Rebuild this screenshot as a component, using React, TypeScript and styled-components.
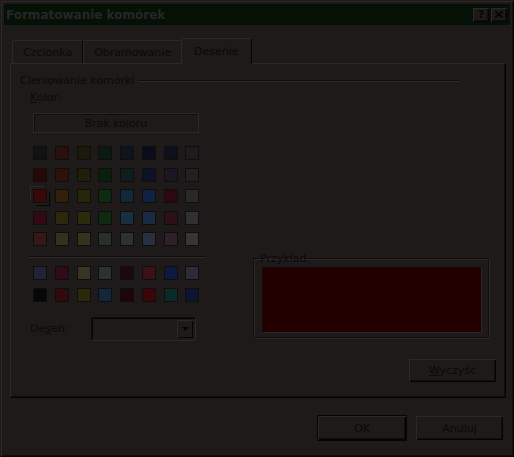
import React from "react";
import styled, { createGlobalStyle } from "styled-components";

const C = {
  page: "#161312",
  face: "#1d1a19",
  light: "#2b2827",
  shadow: "#100e0d",
  dark: "#060505",
  text: "#0b0909",
  title: "#061106",
  titleText: "#262626",
};

const basic = [
  ["#121212", "#2a0f0c", "#1a1a0c", "#0d1a0f", "#0c141c", "#0a0c1c", "#10101c", "#1c1c1c"],
  ["#260808", "#2e1208", "#1e1e0a", "#0a200e", "#0c1e1e", "#0e1228", "#1a1622", "#222020"],
  ["#3a0808", "#33200a", "#24280a", "#0e2a12", "#10283a", "#102242", "#2e0810", "#2a2828"],
  ["#320a14", "#2e280a", "#2a2a0e", "#102a12", "#163040", "#1a2a42", "#2c1018", "#303030"],
  ["#361616", "#34301e", "#34341e", "#283028", "#2c3232", "#26303e", "#30202a", "#363636"],
];

const chart = [
  ["#222236", "#300a1a", "#363626", "#2a3232", "#1e0614", "#3a1216", "#0c1a40", "#2c2c38"],
  ["#060608", "#300a0c", "#2a2a0a", "#10283a", "#1e0608", "#3a0608", "#0a2a2a", "#0c1430"],
];

const GlobalStyle = createGlobalStyle`
  html, body {
    margin: 0;
    padding: 0;
    background: ${C.page};
  }
  body {
    font-family: "DejaVu Sans", "Liberation Sans", sans-serif;
    font-size: 11px;
    color: ${C.text};
  }
`;

const Window = styled.div`
  width: 514px;
  height: 457px;
  box-sizing: border-box;
  background: ${C.face};
  padding: 4px 4px 0 4px;
  box-shadow: inset 1px 1px 0 ${C.face}, inset -1px -1px 0 ${C.dark},
    inset 2px 2px 0 ${C.light}, inset -2px -2px 0 ${C.shadow};
  display: flex;
  flex-direction: column;
`;

const TitleBar = styled.div`
  height: 21px;
  background: ${C.title};
  display: flex;
  align-items: center;
  padding: 0 3px 0 2px;
`;

const TitleText = styled.div`
  flex: 1;
  font-weight: bold;
  font-size: 12px;
  color: ${C.titleText};
`;

const TitleButton = styled.div`
  width: 16px;
  height: 14px;
  box-sizing: border-box;
  background: ${C.face};
  margin-left: 2px;
  box-shadow: inset 1px 1px 0 ${C.light}, inset -1px -1px 0 ${C.dark},
    inset -2px -2px 0 ${C.shadow};
  display: flex;
  align-items: center;
  justify-content: center;
  font-weight: bold;
  font-size: 11px;
  color: ${C.dark};
`;

const Body = styled.div`
  flex: 1;
  display: flex;
  flex-direction: column;
  padding: 12px 4px 0 6px;
`;

const TabRow = styled.div`
  display: flex;
  align-items: flex-end;
  height: 26px;
  padding-left: 2px;
`;

const Tab = styled.div<{ $active?: boolean }>`
  height: ${(p) => (p.$active ? 26 : 23)}px;
  padding: 0 ${(p) => (p.$active ? 12 : 10)}px;
  margin: ${(p) => (p.$active ? "0 -1px 0 -1px" : "0")};
  box-sizing: border-box;
  display: flex;
  align-items: center;
  background: ${C.face};
  position: relative;
  z-index: ${(p) => (p.$active ? 2 : 1)};
  margin-bottom: ${(p) => (p.$active ? "-1px" : "0")};
  border-top: 1px solid ${C.light};
  border-left: 1px solid ${C.light};
  border-right: 1px solid ${C.dark};
  border-radius: 2px 2px 0 0;
`;

const Panel = styled.div`
  height: 335px;
  box-sizing: border-box;
  border-top: 1px solid ${C.light};
  border-left: 1px solid ${C.light};
  border-right: 1px solid ${C.dark};
  border-bottom: 1px solid ${C.dark};
  box-shadow: inset -1px -1px 0 ${C.shadow};
  display: flex;
  flex-direction: column;
  padding: 10px 8px 0 9px;
`;

const GroupHeader = styled.div`
  display: flex;
  align-items: center;
  height: 13px;
  margin-right: 37px;
`;

const GroupLine = styled.div`
  flex: 1;
  height: 0;
  margin-left: 4px;
  border-top: 1px solid ${C.shadow};
  border-bottom: 1px solid ${C.light};
`;

const Content = styled.div`
  display: flex;
`;

const LeftCol = styled.div`
  width: 178px;
  margin-left: 8px;
  display: flex;
  flex-direction: column;
`;

const Label = styled.div`
  height: 13px;
  line-height: 13px;
  margin-left: 2px;
`;

const Flat = styled.div`
  width: 166px;
  height: 20px;
  box-sizing: border-box;
  margin: 9px 0 0 5px;
  border: 1px solid ${C.light};
  box-shadow: inset 1px 1px 0 ${C.shadow};
  display: flex;
  align-items: center;
  justify-content: center;
`;

const Grid = styled.div<{ $top: number }>`
  display: grid;
  grid-template-columns: repeat(8, 14px);
  column-gap: 7.75px;
  row-gap: 7.5px;
  margin: ${(p) => p.$top}px 0 0 5px;
`;

const Swatch = styled.div<{ $color: string; $selected?: boolean }>`
  width: 14px;
  height: 14px;
  box-sizing: border-box;
  background: ${(p) => p.$color};
  border: 1px solid ${C.shadow};
  box-shadow: ${(p) =>
    p.$selected
      ? `0 0 0 2px ${C.face}, -3px -3px 0 0 ${C.light}, 3px 3px 0 0 ${C.dark}`
      : "none"};
`;

const Separator = styled.div`
  margin-top: 10px;
  height: 0;
  border-top: 1px solid ${C.shadow};
  border-bottom: 1px solid ${C.light};
`;

const PatternRow = styled.div`
  display: flex;
  align-items: center;
  margin-top: 15px;
`;

const Combo = styled.div`
  width: 105px;
  height: 24px;
  box-sizing: border-box;
  margin-left: 23px;
  border-top: 1px solid ${C.shadow};
  border-left: 1px solid ${C.shadow};
  border-right: 1px solid ${C.light};
  border-bottom: 1px solid ${C.light};
  box-shadow: inset 1px 1px 0 ${C.dark};
  display: flex;
  justify-content: flex-end;
  padding: 2px;
`;

const ComboButton = styled.div`
  width: 16px;
  box-sizing: border-box;
  background: ${C.face};
  box-shadow: inset 1px 1px 0 ${C.light}, inset -1px -1px 0 ${C.dark};
  display: flex;
  align-items: center;
  justify-content: center;
`;

const RightCol = styled.div`
  flex: 1;
  display: flex;
  flex-direction: column;
  align-items: flex-end;
  padding-top: 165px;
`;

const Fieldset = styled.fieldset`
  width: 236px;
  box-sizing: border-box;
  margin: 0 8px 0 0;
  padding: 2px 6px 4px 8px;
  border: 1px solid ${C.shadow};
  box-shadow: inset 1px 1px 0 ${C.light}, 1px 1px 0 ${C.light};
`;

const Legend = styled.legend`
  padding: 0 1px;
  margin-left: -3px;
  line-height: 13px;
`;

const Sample = styled.div<{ $color: string }>`
  height: 64px;
  background: ${(p) => p.$color};
  border-top: 1px solid ${C.shadow};
  border-left: 1px solid ${C.shadow};
  border-right: 1px solid ${C.light};
  border-bottom: 1px solid ${C.light};
`;

const Button = styled.div<{ $w: number; $default?: boolean }>`
  width: ${(p) => p.$w}px;
  height: 26px;
  box-sizing: border-box;
  display: flex;
  align-items: center;
  justify-content: center;
  background: ${C.face};
  border: 1px solid ${(p) => (p.$default ? C.dark : "transparent")};
  box-shadow: inset 1px 1px 0 ${C.light}, inset -1px -1px 0 ${C.dark},
    inset -2px -2px 0 ${C.shadow};
`;

const ClearButton = styled(Button)`
  margin-top: 20px;
  height: 25px;
`;

const Footer = styled.div`
  display: flex;
  justify-content: flex-end;
  gap: 8px;
  margin: 17px 2px 0 0;
`;

const Key = styled.span`
  text-decoration: underline;
`;

export default function App() {
  return (
    <>
      <GlobalStyle />
      <Window>
        <TitleBar>
          <TitleText>Formatowanie komórek</TitleText>
          <TitleButton>?</TitleButton>
          <TitleButton>
            <svg width="8" height="7" viewBox="0 0 8 7">
              <path d="M0 0 L8 7 M8 0 L0 7" stroke={C.dark} strokeWidth="2" />
            </svg>
          </TitleButton>
        </TitleBar>
        <Body>
          <TabRow>
            <Tab>Czcionka</Tab>
            <Tab>Obramowanie</Tab>
            <Tab $active>Desenie</Tab>
          </TabRow>
          <Panel>
            <GroupHeader>
              Cieniowanie komórki
              <GroupLine />
            </GroupHeader>
            <Content>
              <LeftCol>
                <Label style={{ marginTop: 4 }}>
                  <Key>K</Key>olor:
                </Label>
                <Flat>Brak koloru</Flat>
                <Grid $top={13}>
                  {basic.flatMap((row, r) =>
                    row.map((c, i) => (
                      <Swatch key={`b${r}-${i}`} $color={c} $selected={r === 2 && i === 0} />
                    ))
                  )}
                </Grid>
                <Separator />
                <Grid $top={8}>
                  {chart.flatMap((row, r) =>
                    row.map((c, i) => <Swatch key={`c${r}-${i}`} $color={c} />)
                  )}
                </Grid>
                <PatternRow>
                  <Label>
                    De<Key>s</Key>eń:
                  </Label>
                  <Combo>
                    <ComboButton>
                      <svg width="7" height="4" viewBox="0 0 7 4">
                        <path d="M0 0 H7 L3.5 4 Z" fill={C.dark} />
                      </svg>
                    </ComboButton>
                  </Combo>
                </PatternRow>
              </LeftCol>
              <RightCol>
                <Fieldset>
                  <Legend>Przykład</Legend>
                  <Sample $color="#220000" />
                </Fieldset>
                <ClearButton $w={89}>
                  <span>
                    <Key>W</Key>yczyść
                  </span>
                </ClearButton>
              </RightCol>
            </Content>
          </Panel>
          <Footer>
            <Button $w={90} $default>
              OK
            </Button>
            <Button $w={89}>Anuluj</Button>
          </Footer>
        </Body>
      </Window>
    </>
  );
}
